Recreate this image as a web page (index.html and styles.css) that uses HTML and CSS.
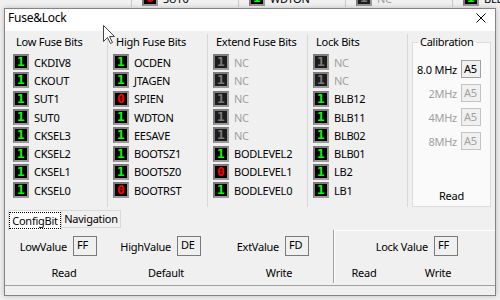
FILE: index.html
```html
<!DOCTYPE html>
<html lang="en">

<head>
    <meta charset="UTF-8">
    <title>Fuse&amp;Lock</title>
    <link rel="stylesheet" href="styles.css">
</head>

<body>
    <div class="backdrop">
        <div class="bcol"><span class="bit zero">0</span><span>SUT0</span></div>
        <div class="bcol"><span class="bit">1</span><span>WDTON</span></div>
        <div class="bcol"><span class="bit nc">1</span><span class="nc-text">NC</span></div>
        <div class="bcol"><span class="bit">1</span><span>BLB</span></div>
    </div>

    <div class="dialog">
        <div class="titlebar">
            <span class="title">Fuse&amp;Lock</span>
            <svg class="close" width="10" height="10" viewBox="0 0 10 10">
                <path d="M0.5 0.5 L9.5 9.5 M9.5 0.5 L0.5 9.5" stroke="#000" stroke-width="1" fill="none" />
            </svg>
        </div>

        <div class="client">
            <div class="top">
                <div class="bits">
                    <div class="col">
                        <div class="col-head">Low Fuse Bits</div>
                        <div class="row"><span class="bit">1</span><span>CKDIV8</span></div>
                        <div class="row"><span class="bit">1</span><span>CKOUT</span></div>
                        <div class="row"><span class="bit">1</span><span>SUT1</span></div>
                        <div class="row"><span class="bit">1</span><span>SUT0</span></div>
                        <div class="row"><span class="bit">1</span><span>CKSEL3</span></div>
                        <div class="row"><span class="bit">1</span><span>CKSEL2</span></div>
                        <div class="row"><span class="bit">1</span><span>CKSEL1</span></div>
                        <div class="row"><span class="bit">1</span><span>CKSEL0</span></div>
                    </div>
                    <div class="col">
                        <div class="col-head">High Fuse Bits</div>
                        <div class="row"><span class="bit">1</span><span>OCDEN</span></div>
                        <div class="row"><span class="bit">1</span><span>JTAGEN</span></div>
                        <div class="row"><span class="bit zero">0</span><span>SPIEN</span></div>
                        <div class="row"><span class="bit">1</span><span>WDTON</span></div>
                        <div class="row"><span class="bit">1</span><span>EESAVE</span></div>
                        <div class="row"><span class="bit">1</span><span>BOOTSZ1</span></div>
                        <div class="row"><span class="bit">1</span><span>BOOTSZ0</span></div>
                        <div class="row"><span class="bit zero">0</span><span>BOOTRST</span></div>
                    </div>
                    <div class="col">
                        <div class="col-head">Extend Fuse Bits</div>
                        <div class="row"><span class="bit nc">1</span><span class="nc-text">NC</span></div>
                        <div class="row"><span class="bit nc">1</span><span class="nc-text">NC</span></div>
                        <div class="row"><span class="bit nc">1</span><span class="nc-text">NC</span></div>
                        <div class="row"><span class="bit nc">1</span><span class="nc-text">NC</span></div>
                        <div class="row"><span class="bit nc">1</span><span class="nc-text">NC</span></div>
                        <div class="row"><span class="bit">1</span><span>BODLEVEL2</span></div>
                        <div class="row"><span class="bit zero">0</span><span>BODLEVEL1</span></div>
                        <div class="row"><span class="bit">1</span><span>BODLEVEL0</span></div>
                    </div>
                    <div class="col">
                        <div class="col-head">Lock Bits</div>
                        <div class="row"><span class="bit nc">1</span><span class="nc-text">NC</span></div>
                        <div class="row"><span class="bit nc">1</span><span class="nc-text">NC</span></div>
                        <div class="row"><span class="bit">1</span><span>BLB12</span></div>
                        <div class="row"><span class="bit">1</span><span>BLB11</span></div>
                        <div class="row"><span class="bit">1</span><span>BLB02</span></div>
                        <div class="row"><span class="bit">1</span><span>BLB01</span></div>
                        <div class="row"><span class="bit">1</span><span>LB2</span></div>
                        <div class="row"><span class="bit">1</span><span>LB1</span></div>
                    </div>
                </div>

                <fieldset class="calib">
                    <legend>Calibration</legend>
                    <div class="cal-rows">
                        <div class="cal-row"><span>8.0 MHz</span><span class="cal-box">A5</span></div>
                        <div class="cal-row off"><span>2MHz</span><span class="cal-box">A5</span></div>
                        <div class="cal-row off"><span>4MHz</span><span class="cal-box">A5</span></div>
                        <div class="cal-row off"><span>8MHz</span><span class="cal-box">A5</span></div>
                    </div>
                    <div class="cal-read">Read</div>
                </fieldset>
            </div>

            <div class="tabs">
                <div class="tab active"><span>ConfigBit</span></div>
                <div class="tab">Navigation</div>
            </div>

            <div class="pages">
                <div class="page">
                    <div class="fields">
                        <div class="cell cell-low"><span>LowValue</span><span class="vbox">FF</span></div>
                        <div class="cell cell-high"><span>HighValue</span><span class="vbox">DE</span></div>
                        <div class="cell cell-ext"><span>ExtValue</span><span class="vbox">FD</span></div>
                    </div>
                    <div class="buttons">
                        <span class="btn btn-read">Read</span>
                        <span class="btn btn-default">Default</span>
                        <span class="btn btn-write">Write</span>
                    </div>
                </div>
                <div class="lockpanel">
                    <div class="fields">
                        <div class="cell cell-lock"><span>Lock Value</span><span class="vbox">FF</span></div>
                    </div>
                    <div class="buttons">
                        <span class="btn small lock-read">Read</span>
                        <span class="btn small lock-write">Write</span>
                    </div>
                </div>
            </div>

            <div class="status"></div>
        </div>
    </div>

    <svg class="cursor" width="13" height="20" viewBox="0 0 13 20">
        <path d="M0.5 0.5 L0.5 16.5 L4.5 12.5 L7.5 18.5 L9.5 17.5 L6.5 11.5 L11.5 11.5 Z" fill="#fff" stroke="#444" stroke-width="1" />
    </svg>
</body>

</html>
```

FILE: styles.css
```css
body {
    margin: 0;
    width: 500px;
    height: 300px;
    overflow: hidden;
    position: relative;
    background-color: #f0f0f0;
    font-family: "Noto Sans", sans-serif;
    font-size: 11px;
    letter-spacing: -0.25px;
    color: #000;
}

/* window behind the dialog */
.backdrop {
    position: absolute;
    top: -11px;
    left: 131px;
    display: flex;
}

.bcol {
    width: 107px;
    height: 18px;
    box-sizing: border-box;
    border-left: 1px solid #c8c8c8;
    padding-left: 10px;
    display: flex;
    align-items: center;
    gap: 5px;
}

.dialog {
    position: absolute;
    left: 4px;
    top: 8px;
    width: 492px;
    height: 288px;
    box-sizing: border-box;
    border: 1px solid #838383;
    background-color: #f0f0f0;
    box-shadow: 0 0 5px rgba(0, 0, 0, 0.22);
    display: flex;
    flex-direction: column;
}

.titlebar {
    height: 22px;
    flex: none;
    background-color: #fff;
    display: flex;
    align-items: flex-start;
    padding-left: 3px;
}

.title {
    font-size: 12px;
    line-height: 18px;
}

.close {
    margin-left: auto;
    margin-right: 9px;
    margin-top: 4px;
}

.client {
    flex: 1;
    display: flex;
    flex-direction: column;
}

.top {
    display: flex;
    height: 173px;
    padding: 3px 0 0 3px;
}

.bits {
    display: flex;
    width: 400px;
}

.col {
    width: 100px;
    box-sizing: border-box;
    border-right: 1px solid #d8d8d8;
}

.col-head {
    line-height: 16px;
    padding-left: 8px;
    margin-bottom: 3px;
}

.row {
    height: 18.3px;
    display: flex;
    align-items: center;
    padding-left: 5px;
    gap: 5px;
}

.bit {
    width: 16px;
    height: 16px;
    box-sizing: border-box;
    border: 2px solid #7c7c7c;
    border-right-color: #9a9a9a;
    border-bottom-color: #9a9a9a;
    background-color: #000;
    color: #00ff00;
    font-family: "DejaVu Sans Mono", monospace;
    font-weight: bold;
    font-size: 13px;
    line-height: 12px;
    letter-spacing: 0;
    text-align: center;
}

.bit.zero {
    color: #ff0000;
}

.bit.nc {
    background-color: #1c1c1c;
    color: #7a7a7a;
}

.nc-text {
    color: #a0a0a0;
}

.calib {
    margin: 0 0 0 4px;
    padding: 0;
    width: 79px;
    height: 173px;
    box-sizing: border-box;
    border: 1px solid #dcdcdc;
    background-color: #fafafa;
}

.calib legend {
    margin-left: 5px;
    padding: 0 2px;
    line-height: 16px;
}

.cal-rows {
    padding-top: 7px;
}

.cal-row {
    height: 24px;
    display: flex;
    justify-content: flex-end;
    align-items: center;
    padding-right: 9px;
    gap: 4px;
}

.cal-box {
    width: 20px;
    height: 18px;
    box-sizing: border-box;
    border: 1px solid #a0a0a0;
    background-color: #f0f0f0;
    padding-left: 2px;
    line-height: 16px;
}

.cal-row.off {
    color: #a0a0a0;
}

.cal-row.off .cal-box {
    border-color: #c4c4c4;
}

.cal-read {
    margin-top: 35px;
    text-align: center;
    line-height: 16px;
}

.tabs {
    height: 23px;
    box-sizing: border-box;
    padding: 3px 0 0 3px;
    display: flex;
    align-items: flex-start;
}

.tab {
    width: 59px;
    height: 18px;
    box-sizing: border-box;
    border: 1px solid #d9d9d9;
    border-left: none;
    background-color: #f0f0f0;
    line-height: 16px;
    text-align: center;
}

.tab.active {
    width: 54px;
    height: 20px;
    border: 1px solid #d9d9d9;
    border-bottom: none;
    background-color: #fff;
}

.tab.active span {
    display: block;
    height: 17px;
    margin-top: 1px;
    box-sizing: border-box;
    border: 1px dotted #000;
    line-height: 15px;
    white-space: nowrap;
    overflow: hidden;
}

.pages {
    height: 56px;
    box-sizing: border-box;
    border-bottom: 1px solid #a0a0a0;
    display: flex;
}

.page {
    width: 328px;
}

.lockpanel {
    flex: 1;
    border-left: 1px solid #a0a0a0;
    box-shadow: inset 1px 1px 0 #fff;
    margin-bottom: 2px;
}

.fields {
    display: flex;
    padding-top: 6px;
}

.cell {
    display: flex;
    justify-content: flex-end;
    align-items: center;
    gap: 6px;
}

.cell-low {
    width: 92px;
}

.cell-high {
    width: 104px;
}

.cell-ext {
    width: 108px;
}

.cell-lock {
    width: 124px;
}

.vbox {
    width: 24px;
    height: 20px;
    box-sizing: border-box;
    border: 1px solid #7a7a7a;
    padding: 1px 0 0 3px;
    line-height: 14px;
}

.buttons {
    display: flex;
    height: 20px;
    margin-top: 6px;
    align-items: center;
}

.btn {
    width: 80px;
    text-align: center;
}

.btn.small {
    width: 50px;
}

.btn-read {
    margin-left: 19px;
}

.btn-default {
    margin-left: 22px;
}

.btn-write {
    margin-left: 33px;
}

.lock-read {
    margin-left: 5px;
}

.lock-write {
    margin-left: 24px;
}

.status {
    flex: 1;
}

.cursor {
    position: absolute;
    left: 103px;
    top: 25px;
}
```
